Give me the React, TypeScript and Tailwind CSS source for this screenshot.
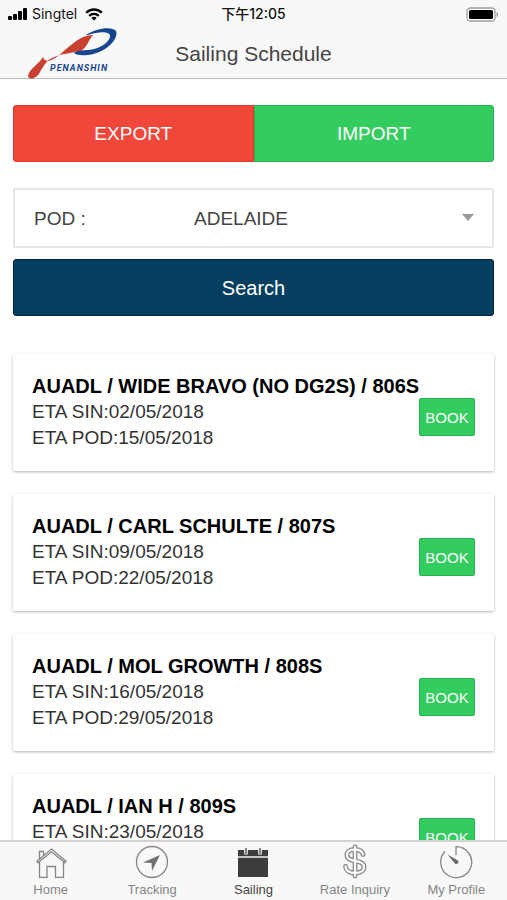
import React from "react";

type Sailing = { title: string; sin: string; pod: string };

const sailings: Sailing[] = [
  { title: "AUADL / WIDE BRAVO (NO DG2S) / 806S", sin: "02/05/2018", pod: "15/05/2018" },
  { title: "AUADL / CARL SCHULTE / 807S", sin: "09/05/2018", pod: "22/05/2018" },
  { title: "AUADL / MOL GROWTH / 808S", sin: "16/05/2018", pod: "29/05/2018" },
  { title: "AUADL / IAN H / 809S", sin: "23/05/2018", pod: "05/06/2018" },
];

function StatusBar() {
  return (
    <div className="grid h-7 grid-cols-3 items-center px-2 font-['Inter','Noto_Sans_CJK_TC',sans-serif] text-sm text-[#111]">
      <div className="flex items-center gap-1">
        <svg width="20" height="12" viewBox="0 0 20 12" aria-hidden="true">
          <rect x="0" y="8" width="4" height="4" rx="1" />
          <rect x="5" y="6" width="4" height="6" rx="1" />
          <rect x="10" y="3" width="4" height="9" rx="1" />
          <rect x="15" y="0" width="4" height="12" rx="1" />
        </svg>
        <span>Singtel</span>
        <svg className="ml-1" width="18" height="13" viewBox="0 0 18 13" fill="none" stroke="black" strokeWidth="2.3" aria-hidden="true">
          <path d="M1.2 4.8C5.5 .4 12.5 .4 16.8 4.8" />
          <path d="M4.2 7.9c2.700-2.700 6.900-2.700 9.600 0" />
          <path d="M9 12.6 6.300 9.900c1.500-1.400 3.900-1.400 5.400 0Z" fill="black" stroke="none" />
        </svg>
      </div>
      <div className="text-center font-medium">下午12:05</div>
      <div className="flex justify-end">
        <svg width="33" height="15" viewBox="0 0 33 15" aria-hidden="true">
          <rect x="1" y="1" width="28" height="13" rx="3.5" fill="white" stroke="#9a9a9a" strokeWidth="1.3" />
          <rect x="3" y="3" width="24" height="9" rx="1.5" fill="black" />
          <path d="M30.500 5v5c2-.8 2-4.200 0-5Z" fill="#9a9a9a" />
        </svg>
      </div>
    </div>
  );
}

function Logo() {
  return (
    <svg width="92" height="52" viewBox="0 0 92 52" role="img" aria-label="Penanshin">
      <path
        d="M58 7C68 0 84-2 88 3c3 7-9 22-29 24-6 .5-11 0-13-2 2-1 3-2 4-3 16 2 30-5 32-13 1-6-10-6-22-2Z"
        fill="#17458f"
      />
      <path
        d="M65 7c-7 0-13 3-18 7C38 20 29 31 21 33c-3 0-5-1-6-4C11 36 1 41 0 48c2 5 9 2 12-4 3-5 6-11 12-14 9-5 19-4 30-8 5-3 6-9 11-15Z"
        fill="#c8402f"
      />
      <text x="22" y="43" fill="#17458f" className="font-['Roboto',sans-serif] text-[9px] font-bold italic tracking-[1px]">
        PENANSHIN
      </text>
    </svg>
  );
}

function RouteFilter() {
  return (
    <form onSubmit={(e) => e.preventDefault()}>
      <div className="grid h-[57px] grid-cols-2 text-[19px] text-white">
        <button type="button" className="rounded-l-[3px] border border-[#e0372b] bg-[#f1463a] pt-px">EXPORT</button>
        <button type="button" className="rounded-r-[3px] border border-[#28b152] bg-[#33cd5f] pt-px">IMPORT</button>
      </div>
      <div className="mt-[26px] flex h-[60px] items-center rounded-xs border-2 border-[#e6e6e6] pt-0.5 pr-4 pl-[19px] text-[19px] text-[#444]">
        <label htmlFor="pod" className="w-40 shrink-0">POD :</label>
        <div className="grid flex-1 items-center">
          <select id="pod" className="col-start-1 row-start-1 h-12 appearance-none bg-transparent outline-none">
            <option>ADELAIDE</option>
          </select>
          <svg className="pointer-events-none col-start-1 row-start-1 mr-px mb-1 justify-self-end" width="14" height="7" viewBox="0 0 14 7" aria-hidden="true">
            <path d="M1 0h12L7 7Z" fill="#999" />
          </svg>
        </div>
      </div>
      <button type="submit" className="mt-[11px] h-[57px] w-full rounded-[3px] border border-[#02253d] bg-[#063f5f] text-xl text-white">
        Search
      </button>
    </form>
  );
}

function SailingCard({ title, sin, pod }: Sailing) {
  return (
    <li className="flex items-start justify-between rounded-xs bg-white px-[19px] pt-[19px] pb-5 text-[19px] leading-[26px] shadow-[0_1px_3px_rgba(0,0,0,0.3)]">
      <div className="min-w-0 flex-1 whitespace-nowrap text-[#333]">
        <h2 className="text-xl leading-[26px] font-bold text-black">{title}</h2>
        <p>ETA SIN:{sin}</p>
        <p>ETA POD:{pod}</p>
      </div>
      <button type="button" className="mt-[25px] h-[38px] w-14 rounded-xs border border-[#28b152] bg-[#33cd5f] text-[15px] leading-none text-white">
        BOOK
      </button>
    </li>
  );
}

const dollar = "M26 11.5C25 8 22 6.500 18 6.500c-5 0-8 2-8 5.500 0 8.500 17 3.500 17 12 0 4-4 6-9 6-5.500 0-9-2.500-9.500-6.500M18 4v29";

const icons: Record<string, React.ReactNode> = {
  Home: (
    <g fill="none" stroke="#858585" strokeWidth="1.3">
      <path d="M4 17.200 18.500 5 33 17.200l-1 1.600L18.500 7.800 5 18.800Z" />
      <path d="M6.500 18v15.300H14V22.500h8.500v10.800h8V18M6.500 15V7.500h4v4" />
    </g>
  ),
  Tracking: (
    <g>
      <circle cx="18" cy="18" r="15.5" fill="none" stroke="#858585" strokeWidth="1.3" />
      <path d="M26 11 9 18.500l8.500.5L18 27Z" fill="#707070" />
    </g>
  ),
  Sailing: (
    <g>
      <path d="M3 6h30v6H3ZM3 13.500h30V33H3Z" fill="#3d3d3d" />
      <path d="M3 12h30v2H3Z" fill="#c4c4c4" />
      <path d="M11 3.500v7M25 3.500v7" stroke="#f8f8f8" strokeWidth="3.600" />
      <path d="M11 4v6M25 4v6" stroke="#555" strokeWidth="1.4" />
    </g>
  ),
  "Rate Inquiry": (
    <g fill="none" strokeLinecap="round">
      <path d={dollar} stroke="#858585" strokeWidth="4.8" transform="translate(0 -1)" />
      <path d={dollar} stroke="#f8f8f8" strokeWidth="2.3" transform="translate(0 -1)" />
    </g>
  ),
  "My Profile": (
    <g>
      <path d="M18 11V2.700a15.500 15.500 0 1 1-11 4.800" fill="none" stroke="#858585" strokeWidth="1.3" />
      <path d="m9.500 10.500 10.300 5.900a2 2 0 0 1-2.800 3Z" fill="#666" />
    </g>
  ),
};

function TabBar() {
  return (
    <nav className="grid shrink-0 grid-cols-5 border-t-2 border-[#d2d2d2] bg-[#f8f8f8] pt-0.5 pb-px">
      {Object.keys(icons).map((name) => (
        <a
          key={name}
          href="#"
          className={
            "flex flex-col items-center text-[13px] leading-[19px] whitespace-nowrap " +
            (name === "Sailing" ? "text-[#444]" : "text-[#858585]")
          }
        >
          <svg width="36" height="36" viewBox="0 0 36 36" aria-hidden="true">{icons[name]}</svg>
          {name}
        </a>
      ))}
    </nav>
  );
}

export default function App() {
  return (
    <div className="flex h-screen flex-col bg-white font-['Liberation_Sans',Arial,sans-serif]">
      <header className="shrink-0 border-b border-[#bdbdbd] bg-[#f8f8f8]">
        <StatusBar />
        <div className="grid h-[50px] grid-cols-[1fr_auto_1fr] items-center">
          <div className="pl-7"><Logo /></div>
          <h1 className="text-[21px] text-[#444]">Sailing Schedule</h1>
        </div>
      </header>
      <main className="min-h-0 flex-1 overflow-x-hidden overflow-y-auto px-[13px] pt-[26px] [scrollbar-width:none]">
        <RouteFilter />
        <ul className="mt-[38px] flex flex-col gap-[23px] pb-6">
          {sailings.map((s) => (
            <SailingCard key={s.title} {...s} />
          ))}
        </ul>
      </main>
      <TabBar />
    </div>
  );
}
